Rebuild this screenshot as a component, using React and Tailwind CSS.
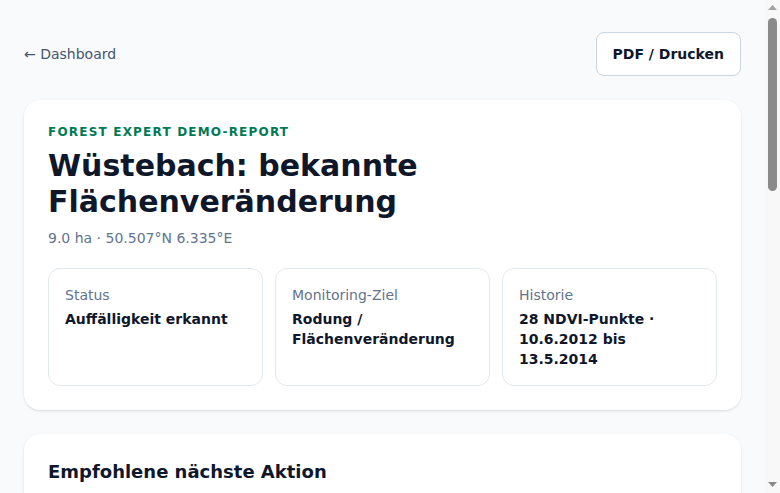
import React from 'react';

const facts = [
    { label: 'Status', value: 'Auffälligkeit erkannt' },
    { label: 'Monitoring-Ziel', value: 'Rodung / Flächenveränderung' },
    { label: 'Historie', value: '28 NDVI-Punkte · 10.6.2012 bis 13.5.2014' },
];

// NDVI-Werte für das Diagramm (nur Demo)
const ndvi = [0.82, 0.84, 0.81, 0.79, 0.83, 0.85, 0.8, 0.78, 0.76, 0.8, 0.82, 0.79, 0.74, 0.52, 0.41, 0.38, 0.36, 0.4, 0.43, 0.39, 0.37, 0.41, 0.44, 0.42, 0.45, 0.43, 0.46, 0.44];

// Nachgebildete Scrollleiste des Browserfensters
function ScrollTrack() {
    return (
        <aside className="sticky top-0 h-screen w-[15px] shrink-0 bg-[#f8f8f8] flex flex-col items-center">
            <svg width="9" height="6" viewBox="0 0 9 6" className="mt-[5px]">
                <polygon points="4.5,0 9,5 0,5" fill="#a3a3a3" />
            </svg>
            <div className="mt-[7px] w-[9px] h-[173px] rounded-full bg-[#8a8a8a]" />
            <div className="flex-1" />
            <svg width="9" height="6" viewBox="0 0 9 6" className="mb-[5px]">
                <polygon points="0,0 9,0 4.5,5" fill="#8a8a8a" />
            </svg>
        </aside>
    );
}

export default function App() {
    const points = ndvi
        .map((v, i) => `${20 + i * (640 / (ndvi.length - 1))},${220 - v * 220}`)
        .join(' ');

    return (
        <div className="flex items-start bg-slate-50 font-['DejaVu_Sans',sans-serif] text-slate-900">
            <main className="flex-1 min-w-0 px-6 pt-8 pb-8">
                {/* --- Kopfzeile --- */}
                <div className="flex items-center justify-between mb-6">
                    <a href="#" className="text-sm text-slate-600">← Dashboard</a>
                    <button className="h-11 px-4 rounded-lg border border-slate-300 bg-white text-sm font-bold text-slate-900">
                        PDF / Drucken
                    </button>
                </div>

                {/* --- Übersicht --- */}
                <section className="bg-white rounded-2xl shadow-sm p-6">
                    <p className="text-xs font-bold tracking-widest text-emerald-700 uppercase">Forest Expert Demo-Report</p>
                    <h1 className="mt-2 text-3xl font-bold">Wüstebach: bekannte Flächenveränderung</h1>
                    <p className="mt-2 text-sm text-slate-500">9.0 ha · 50.507°N 6.335°E</p>

                    <div className="mt-5 grid grid-cols-3 gap-3">
                        {facts.map((f) => (
                            <div key={f.label} className="rounded-xl border border-slate-200 p-4">
                                <p className="text-sm text-slate-500">{f.label}</p>
                                <p className="mt-1 text-sm font-bold">{f.value}</p>
                            </div>
                        ))}
                    </div>
                </section>

                {/* --- Empfehlung --- */}
                <section className="mt-6 bg-white rounded-2xl shadow-sm p-6">
                    <h2 className="text-lg font-bold">Empfohlene nächste Aktion</h2>
                    <p className="mt-3 text-sm text-slate-600 leading-relaxed">
                        Vor-Ort-Begehung der betroffenen Teilfläche einplanen und den Befund mit aktuellen Luftbildern abgleichen.
                    </p>
                    <ul className="mt-4 space-y-2 text-sm text-slate-700">
                        <li>• Abgrenzung der Rodungsfläche prüfen</li>
                        <li>• Forstbetrieb bzw. Eigentümer informieren</li>
                        <li>• Monitoring-Intervall auf 14 Tage verkürzen</li>
                    </ul>
                    <div className="mt-6 rounded-xl bg-emerald-50 border border-emerald-100 p-4 text-sm text-emerald-800">
                        Die Veränderung ist seit Sommer 2013 stabil und deckt sich mit der bekannten Maßnahme.
                    </div>
                </section>

                {/* --- NDVI-Verlauf --- */}
                <section className="mt-6 bg-white rounded-2xl shadow-sm p-6">
                    <h2 className="text-lg font-bold">NDVI-Verlauf</h2>
                    <p className="mt-1 text-sm text-slate-500">10.6.2012 – 13.5.2014</p>
                    <svg viewBox="0 0 680 240" className="mt-4 w-full h-[300px]">
                        <line x1="20" y1="220" x2="660" y2="220" stroke="#e2e8f0" />
                        <line x1="20" y1="110" x2="660" y2="110" stroke="#f1f5f9" />
                        <polyline points={points} fill="none" stroke="#047857" strokeWidth="2" />
                    </svg>
                    <div className="mt-4 grid grid-cols-3 gap-3 text-sm">
                        <div className="rounded-xl border border-slate-200 p-4">
                            <p className="text-slate-500">Vorher</p>
                            <p className="mt-1 font-bold">0.81</p>
                        </div>
                        <div className="rounded-xl border border-slate-200 p-4">
                            <p className="text-slate-500">Nachher</p>
                            <p className="mt-1 font-bold">0.42</p>
                        </div>
                        <div className="rounded-xl border border-slate-200 p-4">
                            <p className="text-slate-500">Differenz</p>
                            <p className="mt-1 font-bold">−0.39</p>
                        </div>
                    </div>
                </section>
            </main>
            <ScrollTrack />
        </div>
    );
}
